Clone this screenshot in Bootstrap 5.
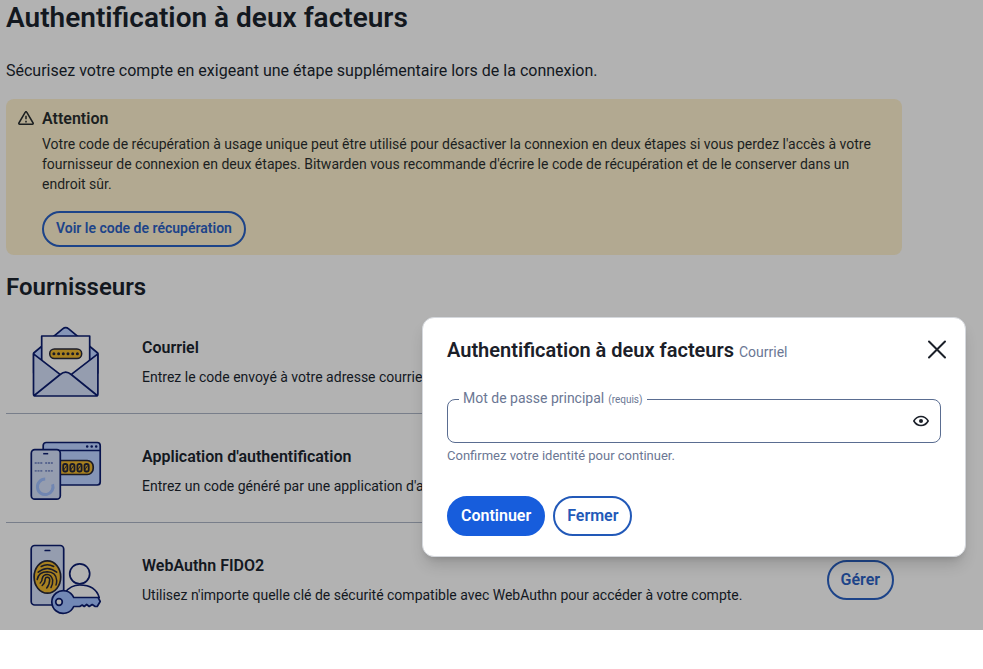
<!DOCTYPE html>
<html lang="fr">
<head>
<meta charset="utf-8">
<meta name="viewport" content="width=device-width, initial-scale=1">
<title>Authentification à deux facteurs</title>
<link href="https://cdn.jsdelivr.net/npm/bootstrap@5.3.0/dist/css/bootstrap.min.css" rel="stylesheet">
<style>
body{font-family:Roboto,"Liberation Sans",sans-serif;color:#13181f;background:#fff;height:669px;overflow:hidden}
.page{height:630px;background:#b2b2b2;padding-left:6px}
.main-col{width:896px}
h1,h2,h3{font-weight:600;margin:0}
.page h1{font-size:28px;line-height:36px}
.intro{font-size:16px;line-height:24px;margin:23px 0 16px}
.callout{background:#b2a991;border-radius:8px;height:156px;padding:8px 12px;color:#1b1f21}
.callout h3{font-size:16px;line-height:24px}
.callout p{font-size:14px;line-height:20px;margin:3px 0 17px}
.warn-icon{margin-right:8px}
.providers{font-size:24px;line-height:32px;margin:16px 0 1px}
.provider{height:109px;padding-top:4px}
.provider:first-of-type{padding-top:6px}
.provider+.provider{border-top:1px solid #787e8a}
.pic{width:136px;padding:2px 0 0 14px}
.provider h3{font-size:16px;line-height:24px}
.provider p{font-size:14px;line-height:20px;margin:7px 0 0;white-space:nowrap}
.pill{--bs-btn-font-weight:600;--bs-btn-border-width:2px;--bs-btn-padding-x:12px;--bs-btn-padding-y:0;--bs-btn-font-size:16px;height:40px;line-height:36px;border-radius:20px}
.pill-dim{--bs-btn-color:#1d4489;--bs-btn-border-color:#1d4489}
.pill-sm{--bs-btn-font-size:14px;height:36px;line-height:30px;padding-bottom:2px}
.pill-line{--bs-btn-color:#2259b8;--bs-btn-border-color:#2259b8}
.pill-full{--bs-btn-color:#fff;--bs-btn-bg:#175ddc;--bs-btn-border-color:#175ddc}
.manage{margin-top:2px}
.dialog{left:422px;top:317px;width:544px;height:240px;background:#fff;border:1px solid #d5d8dd;border-radius:12px;padding:20px 24px;box-shadow:0 10px 15px -3px rgba(0,0,0,.16),0 4px 6px -4px rgba(0,0,0,.16)}
.dialog h2{font-size:20px;line-height:25px;color:#1b2029}
.close-icon{margin:1px -6px 0 0}
.slate{color:#6b7794}
.dialog h2 span{font-size:14px;font-weight:400}
.field{height:53px;margin:25px 0 0;padding:0 11px 0 4px;border:1px solid #5a6d91;border-radius:8px;min-width:0}
.field legend{float:none;width:auto;font-size:14px;line-height:16px;padding:0 4px;margin:0 0 0 7px}
.field legend small{font-size:10px;margin-left:.5px}
.eye-icon{margin-top:5px}
.hint{font-size:13px;line-height:18px;margin-top:4px}
.actions{margin-top:31px}
</style>
</head>
<body class="position-relative">
<main class="page overflow-hidden">
 <div class="main-col">
  <h1>Authentification à deux facteurs</h1>
  <p class="intro">Sécurisez votre compte en exigeant une étape supplémentaire lors de la connexion.</p>
  <section class="callout d-flex">
   <svg class="warn-icon flex-shrink-0 mt-1" width="16" height="16" viewBox="0 0.500 16 16" fill="none" stroke="#1b1f21" stroke-width="1.500" stroke-linejoin="round"><path d="M7.300 1.600a.8.8 0 0 1 1.400 0l6.400 10.900a.8.8 0 0 1-.7 1.200H1.600a.8.8 0 0 1-.7-1.200zM8 5.200v3.600M8 10.200v1.700"/></svg>
   <div>
    <h3>Attention</h3>
    <p>Votre code de récupération à usage unique peut être utilisé pour désactiver la connexion en deux étapes si vous perdez l'accès à votre fournisseur de connexion en deux étapes. Bitwarden vous recommande d'écrire le code de récupération et de le conserver dans un endroit sûr.</p>
    <button class="btn pill pill-dim pill-sm">Voir le code de récupération</button>
   </div>
  </section>
  <h2 class="providers">Fournisseurs</h2>
  <div class="provider d-flex align-items-center">
   <div class="pic flex-shrink-0"><svg width="90" height="85" viewBox="0.300 0 90 85" fill="none" stroke="#08144e" stroke-width="1.700" stroke-linejoin="round">
    <path fill="#8595b7" d="M14 33 43 8.800q3-2.400 6 0L78 33v20H14z"/>
    <path fill="#b2b2b2" d="M22 16h48v45H22z"/>
    <path fill="#959daf" stroke="none" d="M13.800 33.800 40 54.500q6-5.500 12 0L78.200 33.800V74q0 2-2 2H15.800q-2 0-2-2z"/>
    <path d="M41 54.800 13.800 33.800V74q0 2 2 2h60.400q2 0 2-2V33.800L51 54.800M14.500 75.500 40.500 54.500q5.500-4.600 11 0L77.500 75.500"/>
    <rect x="30" y="29" width="32" height="9.500" rx="4.750" fill="#a88120" stroke="#1a1b28" stroke-width="1.500"/>
    <path stroke="#1a1b28" stroke-width="3" stroke-linecap="round" stroke-dasharray="0 4.700" d="M34.200 33.700H58.500"/></svg></div>
   <div><h3>Courriel</h3><p>Entrez le code envoyé à votre adresse courriel.</p></div>
  </div>
  <div class="provider d-flex align-items-center">
   <div class="pic flex-shrink-0"><svg width="90" height="75" viewBox="0.300 -1 90 75" fill="none" stroke="#08144e" stroke-width="1.700" stroke-linejoin="round">
    <rect x="23.500" y="7.500" width="57" height="42.500" rx="3" fill="#8595b7"/>
    <path d="M23.500 15.500h57"/><path stroke-width="2.600" stroke-linecap="round" stroke-dasharray="0 4.500" d="M67.500 11.500h10"/>
    <rect x="34" y="25.500" width="39.500" height="14" rx="6" fill="#a88120" stroke="#1a1b28"/>
    <g stroke="#1a1b28" stroke-width="1.800"><rect x="43.500" y="29" width="4.200" height="7.500" rx="1.800"/><rect x="50.600" y="29" width="4.200" height="7.500" rx="1.800"/><rect x="57.700" y="29" width="4.200" height="7.500" rx="1.800"/><rect x="64.800" y="29" width="4.200" height="7.500" rx="1.800"/><path stroke-width="1" d="m44 35 3-4.500m4 4.500 3-4.500m4 4.500 3-4.500m4 4.500 3-4.500"/></g>
    <rect x="11.600" y="14.700" width="29" height="49.500" rx="3.500" fill="#959daf"/>
    <path stroke-width="1.500" d="M23.500 18.700h5"/>
    <path stroke="#59668f" stroke-width="1.800" stroke-dasharray="2 .8" d="M15 28h8m2.500 0h8M15 35.800h8m2.500 0h8"/>
    <path stroke="#7086b2" stroke-width="3" d="M25.500 44a7.800 7.800 0 1 0 7.400 5.200"/></svg></div>
   <div><h3>Application d'authentification</h3><p>Entrez un code généré par une application d'authentification.</p></div>
  </div>
  <div class="provider d-flex align-items-center">
   <div class="pic flex-shrink-0"><svg width="90" height="90" viewBox="0.300 -3 90 90" fill="none" stroke="#08144e" stroke-width="1.700" stroke-linejoin="round" stroke-linecap="round">
    <rect x="11.500" y="7.500" width="32.500" height="59.500" rx="3.500" fill="#959daf"/>
    <path d="M25.500 12.500h4.500"/>
    <ellipse cx="27.700" cy="39" rx="13.300" ry="16.200" fill="#a88120" stroke="#1a1b28"/>
    <g transform="translate(0 -2.500)" stroke="#1a1b28" stroke-width="1.500"><path d="M21.500 31q6-3.500 12.500 0M18.500 36.700q9-7.400 18.500 0M17.500 44q1.500-7.700 10-7.700 9 .2 9.500 8.700 0 3-.7 4.500M20.500 47.500q2-1.500 2-4.500 1-4 5-4t5.500 5.500q.2 4.500-1.700 7.500M22.500 50q3-2.500 3-6.500c.3-2.500 4.200-2.500 4.500.5 0 3.500-1.300 6.500-3 8.500"/></g>
    <circle cx="60" cy="35.800" r="10" fill="#b2b2b2"/>
    <path fill="#b2b2b2" stroke="none" d="M45 57q5-10 15-10 17 0 19.500 15.500L60 68z"/>
    <path d="M45.500 54.500Q51 47 60 47q16 0 19.500 12.500"/>
    <path fill="#7288b5" d="M54 59.500a11.400 11.400 0 1 0 0 9H60l2.500-1.500 2 1.500 2.500-2 2.500 2 3-2 3 2h2l3-5-2-4z"/>
    <circle cx="39.300" cy="64" r="3.300" fill="#b2b2b2"/></svg></div>
   <div><h3>WebAuthn FIDO2</h3><p>Utilisez n'importe quelle clé de sécurité compatible avec WebAuthn pour accéder à votre compte.</p></div>
   <button class="btn pill pill-dim manage ms-auto me-2">Gérer</button>
  </div>
 </div>
</main>
<section class="dialog position-absolute" role="dialog">
 <div class="d-flex justify-content-between align-items-start">
  <h2>Authentification à deux facteurs <span class="slate">Courriel</span></h2>
  <svg class="close-icon" width="20" height="20" viewBox="0 -0.500 20 20" stroke="#1b2029" stroke-width="2" stroke-linecap="round"><path d="m2 2 16 16M18 2 2 18"/></svg>
 </div>
 <fieldset class="field">
  <legend class="slate">Mot de passe principal <small>(requis)</small></legend>
  <div class="d-flex justify-content-end"><svg class="eye-icon" width="16" height="16" viewBox="0 0 16 16" fill="none" stroke="#1b2029" stroke-width="1.500"><path d="M.8 8Q3.500 3.500 8 3.500T15.200 8Q12.500 12.500 8 12.500T.8 8z"/><circle cx="8" cy="8" r="2" fill="#1b2029" stroke="none"/></svg></div>
 </fieldset>
 <div class="hint slate">Confirmez votre identité pour continuer.</div>
 <div class="actions d-flex gap-2"><button class="btn pill pill-full">Continuer</button><button class="btn pill pill-line">Fermer</button></div>
</section>
<script src="https://cdn.jsdelivr.net/npm/bootstrap@5.3.0/dist/js/bootstrap.bundle.min.js"></script>
</body>
</html>
